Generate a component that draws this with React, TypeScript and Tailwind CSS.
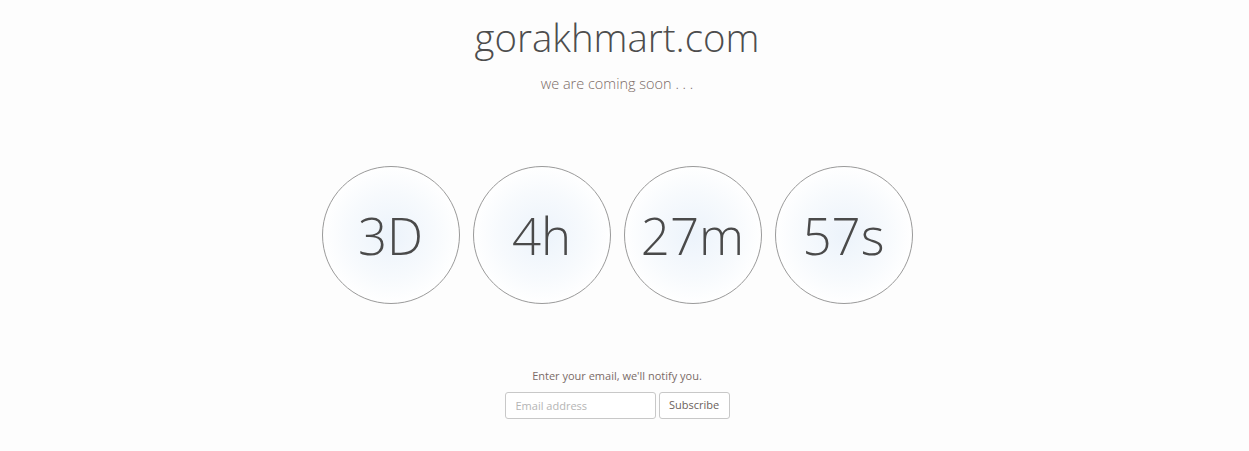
const units = ["3D", "4h", "27m", "57s"];

export default function App() {
  return (
    <div className="min-h-[451px] w-full pr-[15px] bg-[#fdfdfd] flex flex-col items-center font-['Open_Sans',sans-serif]">
      <h1 className="mt-[14px] text-[38.4px] leading-[46px] font-light text-[#4d4d4d]">
        gorakhmart.com
      </h1>
      <p className="mt-[14px] text-[14.5px] leading-[20px] font-light text-[#7b6b67]">
        we are coming soon . . .
      </p>

      <div className="mt-[72px] flex gap-[13px]">
        {units.map((u) => (
          <div
            key={u}
            className="w-[138px] h-[138px] rounded-full border border-[#9a9a9a] flex items-center justify-center bg-[radial-gradient(circle,#ecf3fb_0%,#f7fafd_45%,#ffffff_72%)]"
          >
            <span className="text-[51px] font-light text-[#4a4a4a] leading-none">{u}</span>
          </div>
        ))}
      </div>

      <p className="mt-[64px] text-[11px] leading-[16px] text-[#7b6b67]">
        Enter your email, we'll notify you.
      </p>
      <form className="mt-[8px] flex gap-[3px]" onSubmit={(e) => e.preventDefault()}>
        <input
          type="email"
          placeholder="Email address"
          className="w-[151px] h-[27px] rounded-[3px] border border-[#c8c8c8] bg-white px-[10px] text-[11px] text-[#555] placeholder:text-[#b5b5b5] outline-none"
        />
        <button
          type="submit"
          className="w-[71px] h-[27px] rounded-[3px] border border-[#c8c8c8] bg-white text-[11px] text-[#6b5f5c]"
        >
          Subscribe
        </button>
      </form>
    </div>
  );
}
